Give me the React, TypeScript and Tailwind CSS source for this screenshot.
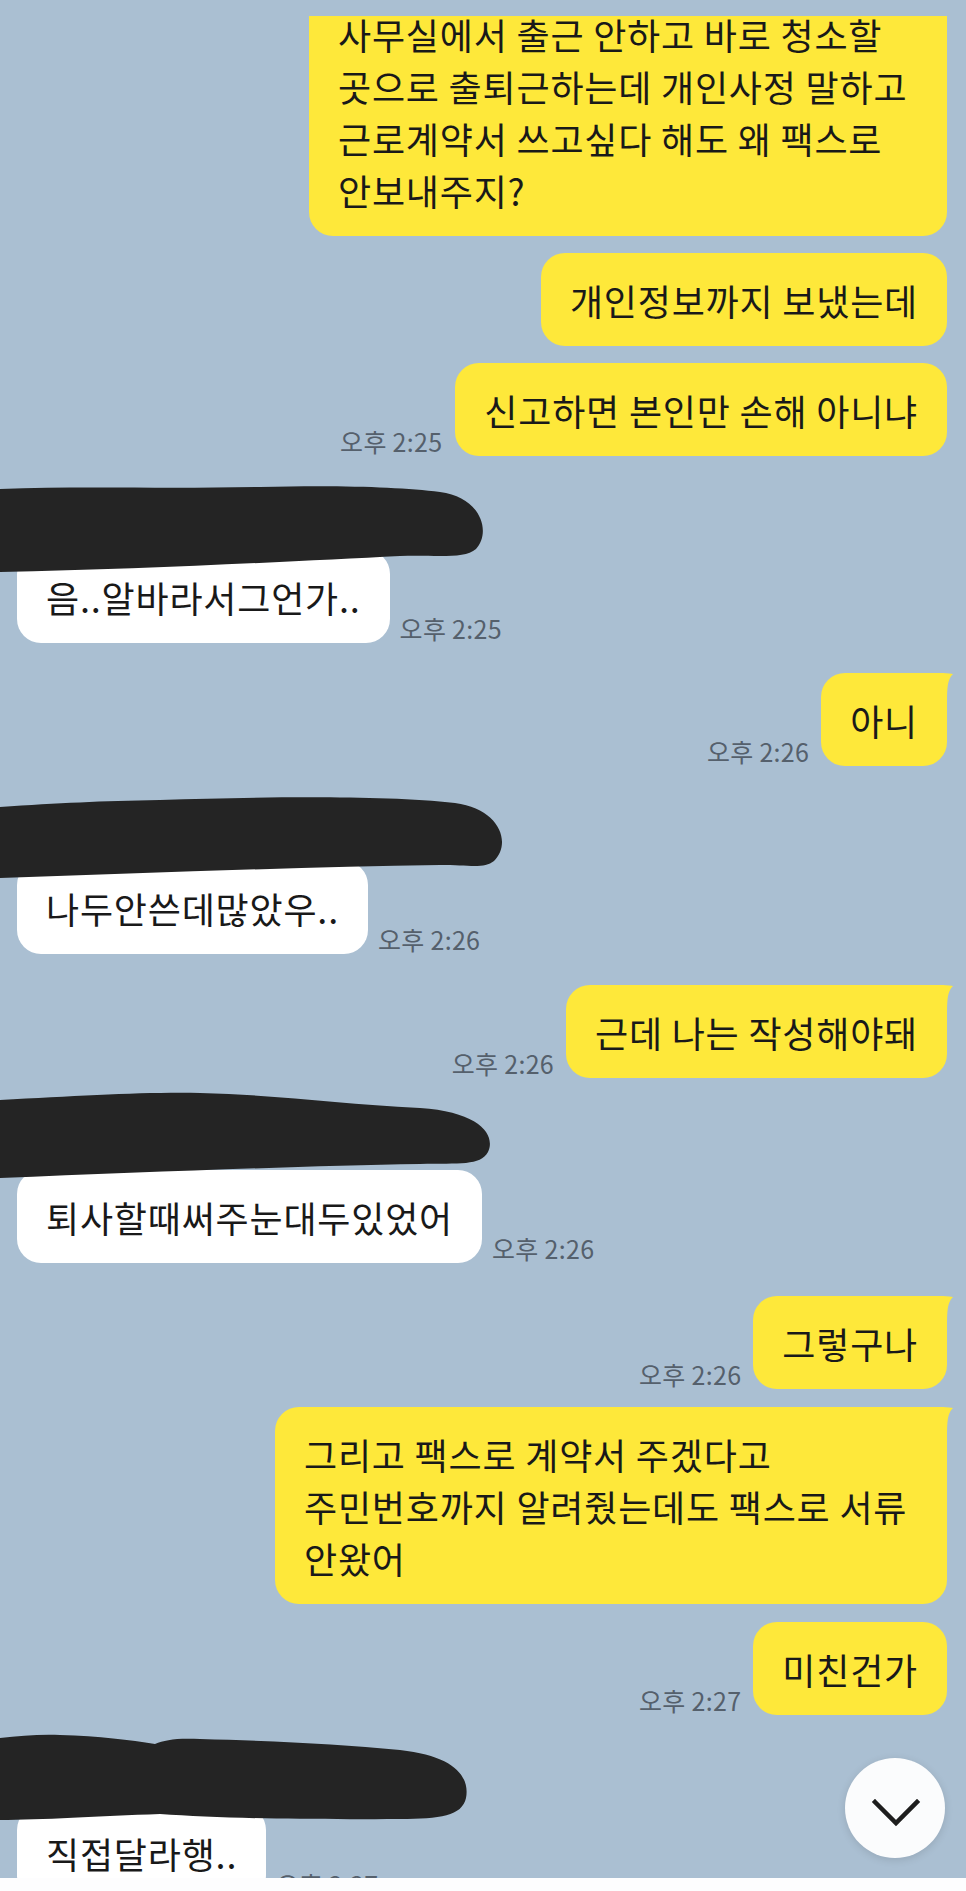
import React from "react";

const YELLOW = "#fee83a";

function Tail() {
  return (
    <svg className="absolute right-[-7px] top-0" width="22" height="26" viewBox="0 0 22 26">
      <path d="M0,0 L8,0 C12,0 16,0 21,1 C17,5 15,10 15,26 L0,26 Z" fill={YELLOW} />
    </svg>
  );
}

function Time({ t }: { t: string }) {
  return (
    <span className="text-[25px] leading-[30px] tracking-[0.3px] text-[#55606c] whitespace-nowrap">{t}</span>
  );
}

function MyBubble({ children, tail, extra }: { children: React.ReactNode; tail?: boolean; extra?: string }) {
  return (
    <div
      className={
        "relative bg-[#fee83a] rounded-[24px] px-[29px] py-[20.5px] text-[36px] leading-[52px] tracking-[0.8px] text-[#191919] whitespace-nowrap " +
        (tail ? "rounded-tr-[6px] " : "") +
        (extra ?? "")
      }
    >
      {tail && <Tail />}
      {children}
    </div>
  );
}

function TheirBubble({ children }: { children: React.ReactNode }) {
  return (
    <div className="bg-white rounded-[24px] px-[29px] py-[20.5px] text-[36px] leading-[52px] tracking-[0.8px] text-[#191919] whitespace-nowrap">
      {children}
    </div>
  );
}

function Blob({ d, w, h, pos }: { d: string; w: number; h: number; pos: string }) {
  return (
    <svg className={"absolute left-0 " + pos} width={w} height={h} viewBox={`0 0 ${w} ${h}`}>
      <path d={d} fill="#242424" />
    </svg>
  );
}

export default function App() {
  return (
    <div className="w-[966px] h-[1891px] flex flex-col bg-[#aabfd2] font-['Noto_Sans_CJK_KR',sans-serif]">
      <div className="h-[16px] shrink-0" />
      <div className="relative flex-1 overflow-hidden">
        {/* A */}
        <div className="flex justify-end pr-[19px] -mt-[29px]">
          <MyBubble extra="w-[638px]">
            사무실에서 출근 안하고 바로 청소할
            <br />
            곳으로 출퇴근하는데 개인사정 말하고
            <br />
            근로계약서 쓰고싶다 해도 왜 팩스로
            <br />
            안보내주지?
          </MyBubble>
        </div>
        {/* B */}
        <div className="flex justify-end pr-[19px] mt-[17px]">
          <MyBubble>개인정보까지 보냈는데</MyBubble>
        </div>
        {/* C */}
        <div className="flex justify-end items-end gap-[13px] pr-[19px] mt-[17px]">
          <Time t="오후 2:25" />
          <MyBubble>신고하면 본인만 손해 아니냐</MyBubble>
        </div>
        {/* D */}
        <div className="relative mt-[19px] pt-[75px]">
          <div className="flex items-end gap-[10px] pl-[17px]">
            <TheirBubble>음..알바라서그언가..</TheirBubble>
            <Time t="오후 2:25" />
          </div>
          <Blob
            pos="top-[6px]"
            w={490}
            h={92}
            d="M0,8 C80,5 160,8 260,6 C340,4 400,6 440,11 C480,16 492,50 476,68 C464,78 440,74 400,75 C300,80 150,88 0,91 Z"
          />
        </div>
        {/* E */}
        <div className="flex justify-end items-end gap-[12px] pr-[19px] mt-[30px]">
          <Time t="오후 2:26" />
          <MyBubble tail>아니</MyBubble>
        </div>
        {/* F */}
        <div className="relative mt-[19px] pt-[76px]">
          <div className="flex items-end gap-[10px] pl-[17px]">
            <TheirBubble>나두안쓴데많았우..</TheirBubble>
            <Time t="오후 2:26" />
          </div>
          <Blob
            pos="top-[8px]"
            w={512}
            h={86}
            d="M0,14 C60,10 100,8 160,7 C260,4 380,2 455,10 C500,16 512,50 494,68 C484,76 470,72 440,72 C300,74 150,80 0,85 Z"
          />
        </div>
        {/* G */}
        <div className="flex justify-end items-end gap-[12px] pr-[19px] mt-[31px]">
          <Time t="오후 2:26" />
          <MyBubble tail>근데 나는 작성해야돼</MyBubble>
        </div>
        {/* H */}
        <div className="relative mt-[10px] pt-[82px]">
          <div className="flex items-end gap-[10px] pl-[17px]">
            <TheirBubble>퇴사할때써주눈대두있었어</TheirBubble>
            <Time t="오후 2:26" />
          </div>
          <Blob
            pos="top-[2px]"
            w={496}
            h={90}
            d="M0,10 C80,6 140,2 200,3 C280,5 340,14 420,18 C480,22 496,45 488,62 C480,76 460,73 420,74 C300,76 150,82 0,88 Z"
          />
        </div>
        {/* I */}
        <div className="flex justify-end items-end gap-[12px] pr-[19px] mt-[33px]">
          <Time t="오후 2:26" />
          <MyBubble tail>그렇구나</MyBubble>
        </div>
        {/* J */}
        <div className="flex justify-end pr-[19px] mt-[18px]">
          <MyBubble tail extra="w-[672px]">
            그리고 팩스로 계약서 주겠다고
            <br />
            주민번호까지 알려줬는데도 팩스로 서류
            <br />
            안왔어
          </MyBubble>
        </div>
        {/* K */}
        <div className="flex justify-end items-end gap-[12px] pr-[19px] mt-[18px]">
          <Time t="오후 2:27" />
          <MyBubble>미친건가</MyBubble>
        </div>
        {/* L */}
        <div className="relative mt-[15px] pt-[76px]">
          <div className="flex items-end gap-[10px] pl-[17px]">
            <TheirBubble>직접달라행..</TheirBubble>
            <Time t="오후 2:27" />
          </div>
          <Blob
            pos="top-[2px]"
            w={472}
            h={90}
            d="M0,6 C20,4 40,2 60,3 C100,4 130,8 155,12 C165,8 175,6 200,7 C280,9 340,12 400,18 C455,24 470,45 466,66 C462,84 440,87 400,87 C300,88 220,86 160,82 C100,84 40,88 0,88 Z"
          />
        </div>

        {/* scroll-down button */}
        <div className="absolute right-[21px] bottom-[20px] w-[100px] h-[100px] rounded-full bg-[#fbfcfd] shadow-[0_2px_8px_rgba(0,0,0,0.12)] flex items-center justify-center">
          <svg width="100" height="100" viewBox="0 0 100 100">
            <polyline points="30,44 51,65 72,44" fill="none" stroke="#1e1e1e" strokeWidth="4.5" strokeLinecap="square" />
          </svg>
        </div>
      </div>
      <div className="h-[13px] shrink-0 bg-[#fdfdfe]" />
    </div>
  );
}
